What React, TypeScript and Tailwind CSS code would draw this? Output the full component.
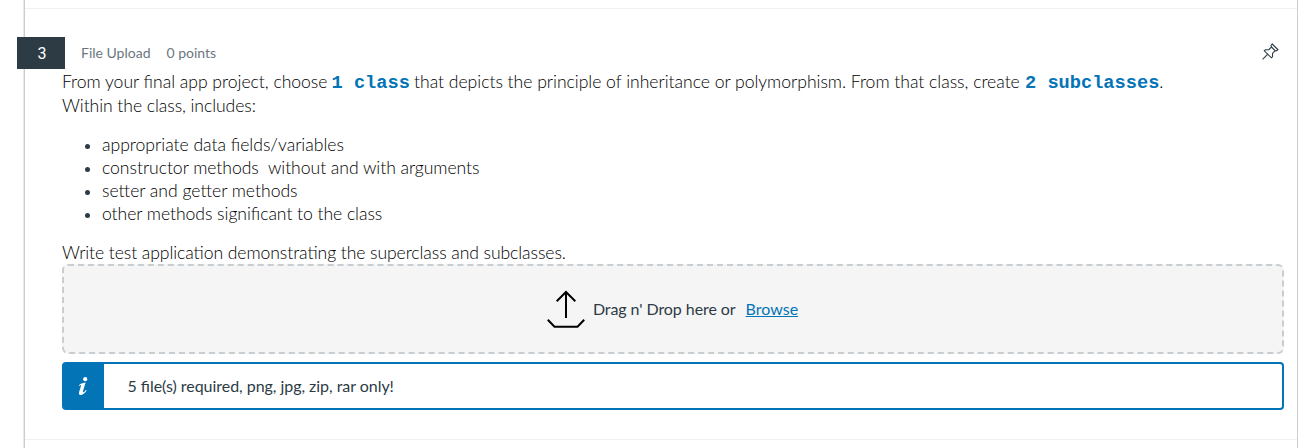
const points = [
  { text: 'appropriate data fields/variables', tracking: 'tracking-[-0.02px]' },
  { text: 'constructor methods \u00a0without and with arguments', tracking: 'tracking-[-0.05px]' },
  { text: 'setter and getter methods', tracking: 'tracking-[-0.02px]' },
  { text: 'other methods significant to the class', tracking: 'tracking-[-0.06px]' },
];

const liga = "[font-feature-settings:'liga'_1]";

function PinIcon() {
  return (
    <svg width="17" height="17" viewBox="0 0 17 17" fill="none" stroke="#2d3b45" strokeWidth="1.1" className="block">
      <path d="M10.2 1 L16 6.8 L14.3 8 L13 7.6 L10.5 10.4 L10.5 13.8 L9.4 14.8 L2.3 7.8 L3.4 6.8 L6.8 6.7 L9.5 4 L9 2.4 Z" />
      <path d="M9.5 4 L13 7.6 M5.8 11.2 L0.6 16.4" />
    </svg>
  );
}

function UploadIcon() {
  return (
    <svg width="38" height="38" viewBox="0 0 38 38" fill="none" stroke="#000" strokeWidth="2" className="block">
      <path d="M19 28V2M9.7 11.3L19 2L28.3 11.3M0.8 29.8L7.5 36.8H30.5L37.2 29.8" />
    </svg>
  );
}

function InfoIcon() {
  return (
    <svg width="10" height="18" viewBox="0 0 10 18" className="block">
      <circle cx="7.2" cy="2.2" r="2.1" fill="#fff" />
      <path d="M0.8 8.6C2.4 6.3 4.2 6 7.6 5.4L4.9 14.6C4.6 15.9 5.6 15.7 8 12.9L8.7 13.5C6.6 16.6 4.7 17.9 2.8 17.9C1 17.9 0.6 16.6 1.1 14.9L3 8.7C3.2 7.6 2.5 7.8 1.3 9.1Z" fill="#fff" />
    </svg>
  );
}

export default function App() {
  return (
    <div className="flex h-[448px] w-[1306px] overflow-hidden bg-white pl-[23px] pr-[7px] font-['Lato',sans-serif] text-[#2d3b45]">
      <div className="w-px bg-[#e8eaec]" />
      <main className="flex w-[1274px] flex-col border-l border-r border-[#c7cdd1]">
        <div className="h-[9px] shrink-0 border-b border-[#f0f1f2]" />
        <section className="h-[431px] shrink-0 border-b border-[#f0f1f2] pt-7">
          <header className="-ml-2 flex h-8 items-center">
            <div className="flex h-8 w-12 items-center justify-center bg-[#2d3b45] pl-0.5 pt-px font-['Roboto',sans-serif] text-base text-white">3</div>
            <div className="ml-4 flex flex-1 gap-4 text-sm text-[#6b7780]">
              <span>File Upload</span>
              <span>0 points</span>
            </div>
            <div className="mr-[18px] -mt-1">
              <PinIcon />
            </div>
          </header>
          <div className="ml-[37px] mr-[13px]">
            <div className={`whitespace-nowrap pt-px text-[17.6px] font-light leading-6 text-black ${liga}`}>
              <p className="flex h-6 items-baseline">
                <span className="w-[269.5px] tracking-[-0.03px]">From your final app project, choose</span>
                <b className="w-[82.5px] font-['Liberation_Mono',monospace] text-[18.67px] font-bold text-[#0374b5]">1 class</b>
                <span className="w-[611px] tracking-[-0.03px]">that depicts the principle of inheritance or polymorphism. From that class, create</span>
                <b className="font-['Liberation_Mono',monospace] text-[18.67px] font-bold text-[#0374b5]">2 subclasses</b>
                <span>.</span>
              </p>
              <p className="tracking-[-0.07px]">Within the class, includes:</p>
              <ul className="mt-[15px] mb-4 leading-[23px]">
                {points.map((p) => (
                  <li key={p.text} className="flex h-[23px] items-center pl-[23px]">
                    <span className="mr-3 mt-1 size-[5px] rounded-full bg-[#2d3b45]" />
                    <span className={p.tracking}>{p.text}</span>
                  </li>
                ))}
              </ul>
              <p className="h-[23px] leading-[23px] tracking-[-0.09px]">Write test application demonstrating the superclass and subclasses.</p>
            </div>
            <div className={`flex h-[90px] items-center justify-center rounded-md border-2 border-dashed border-[#c7cdd1] bg-[#f5f5f5] pr-px text-base ${liga}`}>
              <UploadIcon />
              <span className="ml-2 tracking-[-0.07px]">Drag n' Drop here or</span>
              <a className="ml-2.5 text-[#0374b5] underline" href="#">Browse</a>
            </div>
            <div className={`mt-2 flex h-12 rounded border-2 border-[#0374b5] text-base ${liga}`}>
              <div className="flex w-10 items-center justify-center bg-[#0374b5] pr-[3px]">
                <InfoIcon />
              </div>
              <span className="ml-[23.5px] self-center tracking-[-0.04px]">5 file(s) required, png, jpg, zip, rar only!</span>
            </div>
          </div>
        </section>
      </main>
    </div>
  );
}
